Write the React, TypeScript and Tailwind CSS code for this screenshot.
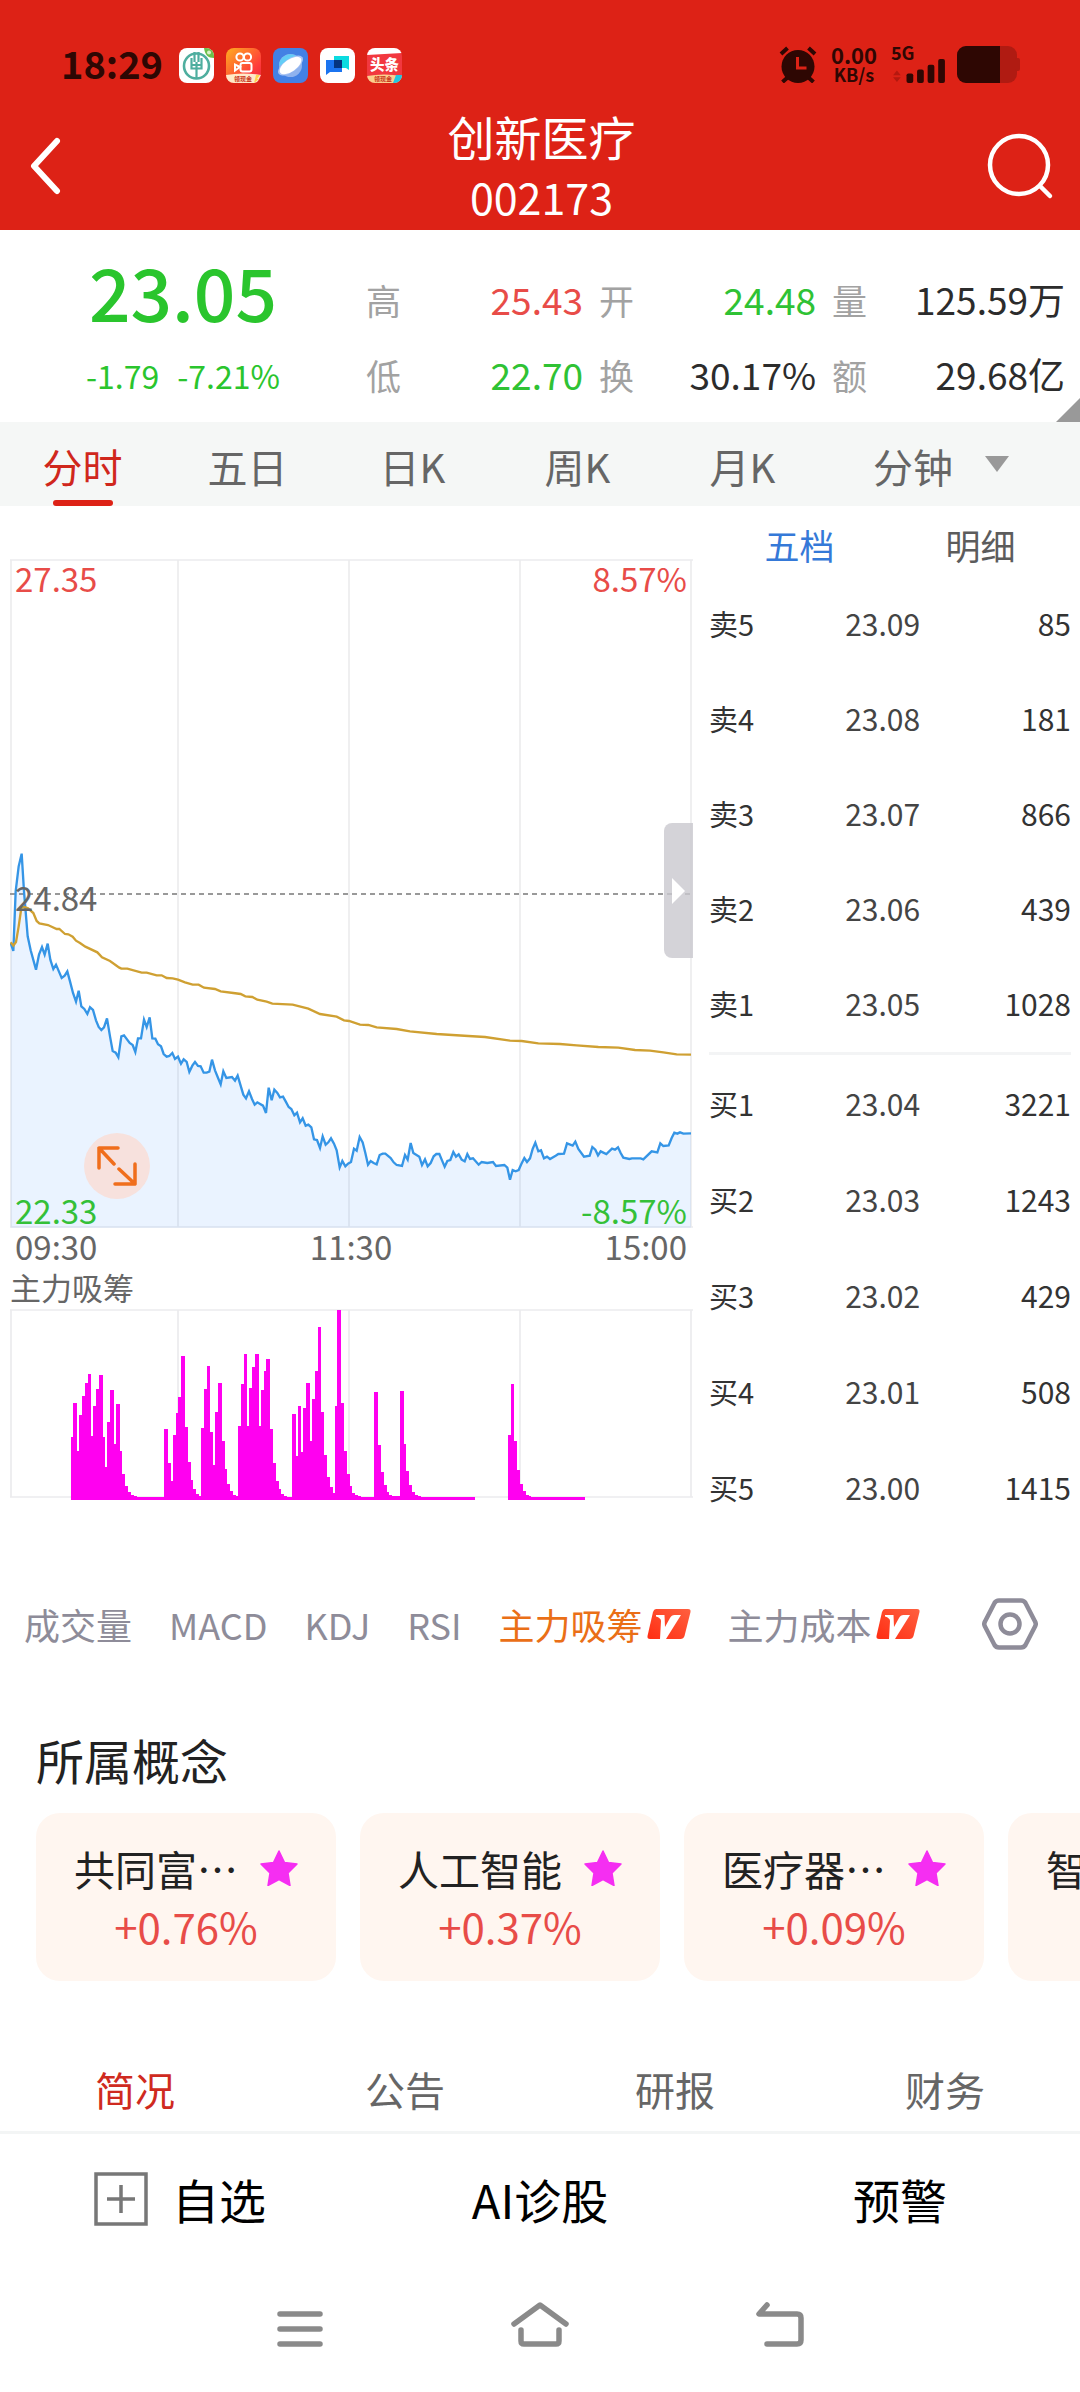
import { useState } from "react";
import type { ReactNode } from "react";
import clsx from "clsx";

type Quote = { label: string; price: string; volume: string };

const STATS = [
  [
    { label: "高", value: "25.43", tone: "text-[#e84c48]" },
    { label: "低", value: "22.70", tone: "text-[#2fc234]" },
  ],
  [
    { label: "开", value: "24.48", tone: "text-[#2fc234]" },
    { label: "换", value: "30.17%", tone: "text-[#2c2c2c]" },
  ],
  [
    { label: "量", value: "125.59万", tone: "text-[#2c2c2c]" },
    { label: "额", value: "29.68亿", tone: "text-[#2c2c2c]" },
  ],
];

const PERIODS = ["分时", "五日", "日K", "周K", "月K"];

const ASKS: Quote[] = [
  { label: "卖5", price: "23.09", volume: "85" },
  { label: "卖4", price: "23.08", volume: "181" },
  { label: "卖3", price: "23.07", volume: "866" },
  { label: "卖2", price: "23.06", volume: "439" },
  { label: "卖1", price: "23.05", volume: "1028" },
];

const BIDS: Quote[] = [
  { label: "买1", price: "23.04", volume: "3221" },
  { label: "买2", price: "23.03", volume: "1243" },
  { label: "买3", price: "23.02", volume: "429" },
  { label: "买4", price: "23.01", volume: "508" },
  { label: "买5", price: "23.00", volume: "1415" },
];

const INDICATORS = [
  { name: "成交量" },
  { name: "MACD" },
  { name: "KDJ" },
  { name: "RSI" },
  { name: "主力吸筹", vip: true },
  { name: "主力成本", vip: true },
];

const CONCEPTS = [
  { name: "共同富…", change: "+0.76%" },
  { name: "人工智能", change: "+0.37%" },
  { name: "医疗器…", change: "+0.09%" },
  { name: "智能医…", change: "+0.05%" },
];

const INFO_TABS = ["简况", "公告", "研报", "财务"];

const PRICE_LINE =
  "32,340 40,364 47,185 56,110 65,72 72,185 83,320 92,362 108,420 117,375 126,352 134,375 143,342 151,390 160,418 168,405 185,445 194,438 202,425 210,455 219,490 228,516 236,483 244,530 253,538 262,553 270,533 279,541 288,572 296,592 304,601 312,593 321,566 330,620 338,664 347,669 355,683 364,620 372,617 389,640 398,646 406,667 414,626 423,626 432,570 440,592 449,563 457,626 466,627 474,644 483,650 491,673 500,681 508,679 517,670 525,688 534,681 543,702 551,689 560,697 568,727 577,708 585,697 594,709 602,710 611,729 620,729 628,726 636,690 645,722 653,742 662,764 670,725 679,745 696,742 705,753 713,738 721,765 730,795 738,806 747,785 756,808 764,825 772,818 789,828 798,850 806,774 815,812 823,780 832,790 840,803 849,801 857,815 866,832 874,838 883,857 891,849 900,878 908,866 917,888 925,885 934,893 942,929 951,931 960,955 968,920 977,945 985,938 993,926 1002,942 1010,962 1019,1013 1027,994 1036,1010 1044,1002 1053,997 1062,957 1070,963 1079,922 " +
  "1088,938 1096,970 1104,1005 1112,994 1121,1000 1130,1004 1139,976 1148,972 1156,972 1172,985 1181,998 1190,1006 1206,1009 1215,976 1223,990 1232,940 1240,970 1258,981 1266,1006 1275,989 1283,1010 1292,1000 1301,980 1309,973 1318,973 1326,992 1334,1011 1342,994 1351,991 1360,967 1368,981 1376,974 1385,990 1394,995 1402,973 1410,988 1419,986 1436,1005 1445,997 1462,1000 1479,997 1488,1009 1513,1006 1522,1014 1530,1050 1538,1021 1547,1025 1556,1021 1564,1003 1573,985 1581,997 1590,986 1598,958 1606,939 1615,965 1623,962 1632,986 1641,981 1650,988 1667,978 1675,973 1692,972 1701,941 1718,948 1726,936 1735,958 1752,981 1769,978 1777,952 1786,960 1794,977 1802,965 1819,973 1836,957 1845,960 1854,953 1862,970 1870,984 1888,988 1896,986 1922,986 1930,989 1955,965 1972,968 1981,941 1990,949 2006,947 2015,925 2023,909 2032,912 2040,908 2050,912 2073,911";

const AVERAGE_LINE =
  "32,338 40,348 48,337 56,290 64,235 73,232 84,236 100,250 110,274 118,281 144,286 170,298 178,298 195,313 205,314 218,321 228,333 240,340 256,351 292,368 306,383 330,394 358,414 364,417 382,417 425,429 440,429 470,437 485,437 500,445 518,446 534,450 555,458 578,465 596,465 612,474 645,478 662,485 700,490 722,493 736,500 757,502 772,510 800,516 817,522 878,525 925,537 960,553 1010,561 1032,572 1047,574 1080,585 1105,586 1130,593 1190,598 1230,605 1310,613 1405,619 1455,622 1530,633 1565,634 1615,641 1680,643 1730,647 1795,652 1855,654 1905,661 1950,663 1990,668 2030,674 2073,675";

// Runs of one-minute bars: first minute, then the height of each bar.
const BAR_RUNS: { start: number; heights: number[] }[] = [
  {
    start: 0,
    heights: [
      63, 97, 49, 85, 104, 117, 126, 64, 94, 111, 125, 63, 33, 78, 110, 56, 96,
      49, 26, 14, 8, 5, 4, 3, 3, 3, 3, 3, 3, 3, 3, 3, 3,
    ],
  },
  { start: 33, heights: [71, 37, 19, 65, 87, 103, 144, 73, 38, 20, 11, 6, 4] },
  { start: 46, heights: [72, 111, 134, 68, 35, 88, 117, 59, 31, 16, 9, 5, 4] },
  {
    start: 59,
    heights: [
      74, 116, 146, 74, 112, 133, 146, 74, 110, 129, 141, 71, 37, 19, 11, 6, 4,
      3, 3,
    ],
  },
  {
    start: 78,
    heights: [86, 44, 94, 48, 92, 117, 59, 101, 129, 173, 88, 45, 23, 13, 7],
  },
  { start: 93, heights: [94, 190, 97, 49, 26, 14, 7, 5, 4, 3, 3, 3, 3, 3] },
  { start: 107, heights: [108, 55, 28, 15, 8, 5, 4, 4, 4] },
  {
    start: 116,
    heights: [
      109, 56, 29, 15, 8, 5, 4, 3, 3, 3, 3, 3, 3, 3, 3, 3, 3, 3, 3, 3, 3, 3, 3,
      3, 3, 3,
    ],
  },
  {
    start: 154,
    heights: [
      65, 116, 59, 30, 16, 9, 5, 4, 3, 3, 3, 3, 3, 3, 3, 3, 3, 3, 3, 3, 3, 3, 3,
      3, 3, 3, 3,
    ],
  },
];

const MINUTE = 2.84;

function AppIcon({ children }: { children: ReactNode }) {
  return (
    <svg viewBox="0 0 35 35" className="size-[35px] rounded-lg">
      {children}
    </svg>
  );
}

function StatusBar() {
  return (
    <div className="flex h-[83px] items-end justify-between pr-[60px] pl-[61px] text-[#2e0703]">
      <div className="flex items-end gap-3">
        <span className="mr-1 h-[37px] w-[102px] text-[38px] leading-[33px] font-bold">
          18:29
        </span>
        <AppIcon>
          <rect width="35" height="35" fill="#fff" />
          <path d="M25 0h10v10c-6 0-9-3-10-10z" fill="#6cc04a" />
          <circle cx="30" cy="4.500" r="2" fill="#d8f0c8" />
          <circle
            cx="17.500"
            cy="18"
            r="12.500"
            fill="none"
            stroke="#4fae9f"
            strokeWidth="2.600"
          />
          <path
            d="M17.500 14v17M12.500 10v10.500h10V10M15.500 4v10M19.500 4v10M12.500 17h10"
            fill="none"
            stroke="#4fae9f"
            strokeWidth="2.200"
          />
        </AppIcon>
        <AppIcon>
          <defs>
            <linearGradient id="video" x1="0" y1="0" x2="1" y2="1">
              <stop offset="0" stopColor="#ffae1f" />
              <stop offset="0.700" stopColor="#ff3b3b" />
              <stop offset="1" stopColor="#e8263c" />
            </linearGradient>
          </defs>
          <rect width="35" height="35" fill="url(#video)" />
          <g fill="none" stroke="#fff" strokeWidth="2">
            <circle cx="14" cy="9" r="3.600" />
            <circle cx="21.500" cy="9" r="3.600" />
            <rect x="14.500" y="15" width="11" height="8.500" rx="2" />
            <path d="M14 19l-5-2.500v6z" />
          </g>
          <path d="M0 27q17-3 35 0l-4 8H0z" fill="#ffe9c9" />
          <path d="M30 27l4 0-3 4 2 0-5 4z" fill="#ffd24a" />
          <text x="8" y="33" fontSize="6" fontWeight="700" fill="#c8331a">
            领现金
          </text>
        </AppIcon>
        <AppIcon>
          <rect width="35" height="35" fill="#4381e4" />
          <circle cx="17.500" cy="17.500" r="11.500" fill="#8fb2ee" />
          <path d="M6 18a11.500 11.500 0 0 1 18-9.500z" fill="#63cdf6" />
          <ellipse
            cx="17.500"
            cy="17.500"
            rx="14.500"
            ry="6.500"
            fill="#a9c4f4"
            transform="rotate(-35 17.500 17.500)"
          />
          <ellipse
            cx="17.500"
            cy="17.500"
            rx="12.500"
            ry="6"
            fill="#fff"
            transform="rotate(-35 17.500 17.500)"
          />
        </AppIcon>
        <AppIcon>
          <rect width="35" height="35" fill="#fff" />
          <path d="M14 8h15v14l-3-2H14z" fill="#0bdbe0" />
          <path d="M6 12h16v12H10l-4 3z" fill="#1b74f0" />
          <rect x="14" y="12" width="8" height="8" fill="#05357f" />
        </AppIcon>
        <AppIcon>
          <rect width="35" height="35" fill="#f2383f" />
          <path d="M0 0h35v5l-35 2z" fill="#fff" />
          <path d="M0 28q17-3 35 0v7H0z" fill="#fbcf8e" />
          <path d="M29 27h6v8h-9z" fill="#21c6e0" />
          <text x="3" y="22" fontSize="14.500" fontWeight="900" fill="#fff">
            头条
          </text>
          <text x="7" y="33" fontSize="6" fontWeight="700" fill="#c8331a">
            领现金
          </text>
        </AppIcon>
      </div>

      <div className="flex items-end">
        <svg viewBox="0 0 38 37" className="mr-3 h-[37px] w-[38px]">
          <circle cx="19" cy="20.500" r="16.500" fill="currentColor" />
          <path
            d="M2 8l6.500-6M36 8l-6.500-6M8 32l-4.500 4M30 32l4.500 4"
            stroke="currentColor"
            strokeWidth="4"
          />
          <path
            d="M18.500 11v11h9"
            fill="none"
            stroke="#dd2216"
            strokeWidth="3"
          />
        </svg>
        <span className="flex w-[50px] flex-col items-center font-bold">
          <span className="text-[22px] leading-[22px]">0.00</span>
          <span className="text-[18px] leading-[18px]">KB/s</span>
        </span>
        <div className="ml-3 flex h-10 w-[58px] flex-col font-bold">
          <span className="h-4 text-[18px] leading-[18px]">5G</span>
          <svg viewBox="0 0 56 25" className="h-[25px] w-[56px]">
            <path d="M1 17l4-5 4 5zM1 19l4 5 4-5z" fill="#b4180f" />
            <g fill="currentColor">
              <rect x="15" y="15" width="7" height="10" rx="2" />
              <rect x="26" y="11" width="7" height="14" rx="2" />
              <rect x="37" y="6" width="7" height="19" rx="2" />
              <rect x="48" width="7" height="25" rx="2" />
            </g>
          </svg>
        </div>
        <svg viewBox="0 0 63 37" className="ml-2 h-[37px] w-[63px]">
          <rect width="60" height="37" rx="9" fill="#b01b12" />
          <rect x="58" y="12" width="5" height="13" rx="2" fill="#b01b12" />
          <path
            d="M9 0h34v37H9a9 9 0 0 1-9-9V9a9 9 0 0 1 9-9z"
            fill="currentColor"
          />
        </svg>
      </div>
    </div>
  );
}

function TitleBar() {
  return (
    <div className="flex items-center justify-between pr-[26px] pl-[29px] text-white">
      <button type="button" aria-label="返回" className="w-[68px]">
        <svg viewBox="0 0 34 58" className="h-[58px] w-[34px]">
          <path
            d="M28 4L5 29l23 25"
            fill="none"
            stroke="currentColor"
            strokeWidth="6"
            strokeLinecap="round"
            strokeLinejoin="round"
          />
        </svg>
      </button>
      <h1 className="text-center font-normal">
        <span className="block h-[61px] text-[47px] leading-[54px]">
          创新医疗
        </span>
        <span className="block text-[43px] leading-[52px]">002173</span>
      </h1>
      <button type="button" aria-label="搜索" className="w-[68px]">
        <svg viewBox="0 0 68 68" className="size-[68px]">
          <g
            fill="none"
            stroke="currentColor"
            strokeWidth="4.500"
            strokeLinecap="round"
          >
            <circle cx="33" cy="33" r="29" />
            <path d="M54 54l10 10" />
          </g>
        </svg>
      </button>
    </div>
  );
}

function Summary() {
  return (
    <section className="relative grid h-48 grid-cols-[366fr_217fr_233fr_249fr_15fr] pt-8">
      <div className="flex flex-col items-center text-[#2ac52d]">
        <p className="h-[75px] text-[73px] leading-[56px] font-medium">23.05</p>
        <p className="flex gap-[18px] text-[32px] leading-[77px]">
          <span>-1.79</span>
          <span>-7.21%</span>
        </p>
      </div>
      {STATS.map((column, i) => (
        <dl
          key={column[0].label}
          className={clsx("text-[37px] leading-[75px]", i > 0 && "pl-4")}
        >
          {column.map((stat) => (
            <div key={stat.label} className="flex justify-between">
              <dt className="text-[35px] text-[#a2a2a2]">{stat.label}</dt>
              <dd className={stat.tone}>{stat.value}</dd>
            </div>
          ))}
        </dl>
      ))}
      <svg viewBox="0 0 24 24" className="absolute right-0 bottom-0 size-6">
        <path d="M24 0v24H0z" fill="#999" />
      </svg>
    </section>
  );
}

function PeriodTabs() {
  const [active, setActive] = useState("分时");
  return (
    <nav className="grid h-[84px] grid-cols-[repeat(5,165fr)_255fr] bg-[#f5f7f6] text-[40px] leading-[88px] text-[#666]">
      {PERIODS.map((name) => (
        <button
          key={name}
          type="button"
          onClick={() => setActive(name)}
          className={clsx(
            "flex flex-col items-center",
            name === active && "text-[#d0271c]",
          )}
        >
          <span className="h-[78px]">{name}</span>
          {name === active && (
            <span className="h-[6px] w-[60px] rounded-full bg-[#dd2216]" />
          )}
        </button>
      ))}
      <button type="button" className="flex h-[84px] items-center gap-8 pl-12">
        <span className="h-[84px]">分钟</span>
        <svg viewBox="0 0 24 16" className="h-4 w-6">
          <path d="M0 0h24L12 16z" fill="#999" />
        </svg>
      </button>
    </nav>
  );
}

function PriceChart() {
  return (
    <div className="relative text-[33px] leading-[36px]">
      <svg viewBox="30 -812 2049 2007" className="block w-full">
        <path
          d="M30-809H2079M30 1192H2079M33-809V1194M534-809V1194M1047-809V1194M1560-809V1194M2073-809V1194"
          stroke="#ececee"
          strokeWidth="5"
          fill="none"
        />
        <path
          d="M30 193H2079"
          stroke="#999"
          strokeWidth="6"
          strokeDasharray="15 12"
        />
        <polygon
          points={`32,1194 ${PRICE_LINE} 2073,1194`}
          fill="#2f86ff"
          fillOpacity="0.1"
        />
        <polyline
          points={PRICE_LINE}
          fill="none"
          stroke="#3595e6"
          strokeWidth="7"
        />
        <polyline
          points={AVERAGE_LINE}
          fill="none"
          stroke="#cfa032"
          strokeWidth="7"
        />
      </svg>
      <span className="absolute top-px left-[5px] text-[#e84c48]">27.35</span>
      <span className="absolute top-px right-[6px] text-[#e84c48]">8.57%</span>
      <span className="absolute top-[320px] left-[5px] text-[#666]">24.84</span>
      <span className="absolute bottom-0 left-[5px] text-[#34c038]">22.33</span>
      <span className="absolute right-[6px] bottom-0 text-[#34c038]">
        -8.57%
      </span>
      <button
        type="button"
        aria-label="收起盘口"
        className="absolute top-[264px] right-0 flex h-[135px] w-[29px] items-center justify-center rounded-l-lg bg-[#c9c8ce]/80"
      >
        <svg viewBox="0 0 13 26" className="h-[26px] w-[13px]">
          <path d="M0 0l13 13L0 26z" fill="#fff" />
        </svg>
      </button>
      <button
        type="button"
        aria-label="全屏"
        className="absolute bottom-[29px] left-[74px] flex size-[66px] items-center justify-center rounded-full bg-[#f7e1dd]"
      >
        <svg viewBox="0 0 40 40" className="size-10">
          <path
            d="M2 22V2h19M2 2l15 16M38 18v20H18M38 38L22 23"
            fill="none"
            stroke="#f06e1c"
            strokeWidth="3.500"
            strokeLinecap="round"
            strokeLinejoin="round"
          />
        </svg>
      </button>
    </div>
  );
}

function VolumeChart() {
  return (
    <svg viewBox="0 0 683 193" className="block w-full">
      <path
        d="M0 2H683M0 189H683M1 2V189M168 2V189M339 2V189M510 2V189M681 2V189"
        stroke="#ececee"
        strokeWidth="1.700"
        fill="none"
      />
      <g fill="#ff00f0" shapeRendering="crispEdges">
        {BAR_RUNS.map(({ start, heights }) =>
          heights.map((h, i) => (
            <rect
              key={start + i}
              x={60.5 + (start + i) * MINUTE}
              y={191.5 - h}
              width={3.6}
              height={h}
            />
          )),
        )}
      </g>
    </svg>
  );
}

function QuoteRows({ rows, height }: { rows: Quote[]; height: string }) {
  return (
    <table className="w-full text-[30px] leading-9 text-[#333]">
      <tbody>
        {rows.map((q) => (
          <tr key={q.label} className={height}>
            <th scope="row" className="w-1/4 text-left text-[29px] font-normal">
              {q.label}
            </th>
            <td className="w-1/3 text-right text-[#444]">{q.price}</td>
            <td className="text-right">{q.volume}</td>
          </tr>
        ))}
      </tbody>
    </table>
  );
}

function OrderBook() {
  return (
    <div className="pr-[9px] pl-4">
      <div className="grid h-[69px] grid-cols-2 pt-2 text-[35px] leading-[61px]">
        <button type="button" className="text-[#3579d8]">
          五档
        </button>
        <button type="button" className="text-[#5c5c5c]">
          明细
        </button>
      </div>
      <QuoteRows rows={ASKS} height="h-[95px]" />
      <hr className="mt-0.5 border-t-[3px] border-[#f3f4f5]" />
      <QuoteRows rows={BIDS} height="h-24" />
    </div>
  );
}

function VipBadge({ id }: { id: string }) {
  return (
    <svg viewBox="0 0 44 30" className="h-[30px] w-[44px]">
      <defs>
        <linearGradient id={id} x1="1" y1="0" x2="0" y2="1">
          <stop offset="0" stopColor="#ff6040" />
          <stop offset="1" stopColor="#ff2d12" />
        </linearGradient>
      </defs>
      <path
        d="M9 0h32q3 0 2.500 3l-6 24q-1 3-4 3H3q-3 0-2.500-3l5.500-24Q7 0 9 0z"
        fill={`url(#${id})`}
      />
      <path
        d="M9 6h8.500l.5 12 5-9q1.500-3 4.500-3H34L19 30h-6l1-18q0-3-5-4.500z"
        fill="#fff"
      />
    </svg>
  );
}

function IndicatorTabs() {
  const [active, setActive] = useState("主力吸筹");
  return (
    <nav className="flex h-[178px] items-center gap-[37px] pr-[42px] pl-6 text-[36px] leading-[44px]">
      {INDICATORS.map(({ name, vip }) => (
        <button
          key={name}
          type="button"
          onClick={() => setActive(name)}
          className={clsx(
            "flex items-center gap-1 whitespace-nowrap",
            name === active ? "text-[#ea6f17]" : "text-[#8e8c99]",
          )}
        >
          {name}
          {vip && <VipBadge id={`vip-${name}`} />}
        </button>
      ))}
      <button type="button" aria-label="指标设置" className="ml-auto">
        <svg viewBox="0 0 56 52" className="h-[52px] w-[56px]">
          <g fill="none" stroke="#8e8c99" strokeWidth="4.500">
            <path d="M17 2.500h22q3 0 4.500 2.500l9.500 18.500q1.500 2.500 0 5L43.500 47q-1.500 2.500-4.500 2.500H17q-3 0-4.500-2.500L3 28.500q-1.500-2.500 0-5L12.500 5Q14 2.500 17 2.500z" />
            <circle cx="28" cy="26" r="9.500" />
          </g>
        </svg>
      </button>
    </nav>
  );
}

function Concepts() {
  return (
    <section className="pt-0.5">
      <h2 className="mb-[7px] pl-9 text-[48px] leading-[88px] font-normal text-[#222]">
        所属概念
      </h2>
      <div className="flex gap-6 overflow-hidden pt-[3px] pl-9">
        {CONCEPTS.map((c) => (
          <a
            key={c.name}
            href="#"
            className="flex h-[168px] w-[300px] shrink-0 flex-col items-center rounded-3xl bg-[#fff6f0] pt-[26px]"
          >
            <span className="flex h-[58px] items-center gap-[22px] text-[41px] leading-[58px] text-[#222]">
              {c.name}
              <svg viewBox="0 0 38 36" className="h-9 w-[38px]">
                <path
                  d="M19 1l5.500 11.500L37 14l-9 9 2 12.500-11-6-11 6L10 23l-9-9 12.500-1.500z"
                  fill="#f52ef2"
                  stroke="#f52ef2"
                  strokeWidth="1.500"
                  strokeLinejoin="round"
                />
              </svg>
            </span>
            <span className="text-[42px] leading-[58px] text-[#e84c48]">
              {c.change}
            </span>
          </a>
        ))}
      </div>
    </section>
  );
}

function InfoTabs() {
  const [active, setActive] = useState("简况");
  return (
    <nav className="mt-[66px] grid h-[87px] grid-cols-4 border-b-[3px] border-[#f3f5f5] text-[40px] leading-[78px]">
      {INFO_TABS.map((name) => (
        <button
          key={name}
          type="button"
          onClick={() => setActive(name)}
          className={name === active ? "text-[#cf2a20]" : "text-[#666]"}
        >
          {name}
        </button>
      ))}
    </nav>
  );
}

function ActionBar() {
  return (
    <div className="grid h-[130px] grid-cols-3 text-[47px] text-black">
      <button type="button" className="flex items-center justify-center gap-6">
        <svg viewBox="0 0 54 54" className="size-[54px]">
          <path
            d="M2 2h50v50H2zM27 13v28M13 27h28"
            fill="none"
            stroke="#777"
            strokeWidth="3.500"
          />
        </svg>
        自选
      </button>
      <button type="button">AI诊股</button>
      <button type="button">预警</button>
    </div>
  );
}

function SystemNav() {
  return (
    <div className="flex h-[125px] items-center justify-center gap-[180px] text-[#8a8a8a]">
      {[
        ["最近任务", "M10 17h40M10 32h40M10 47h40"],
        ["主屏幕", "M4 27L30 8l26 19M11 33v11q0 3 3 3h32q3 0 3-3V33"],
        ["返回", "M17 8L9 17h38q4 0 4 4v22q0 4-4 4H17"],
      ].map(([label, d]) => (
        <button key={label} type="button" aria-label={label}>
          <svg viewBox="0 0 60 60" className="size-[60px]">
            <path
              d={d}
              fill="none"
              stroke="currentColor"
              strokeWidth="5.500"
              strokeLinecap="round"
              strokeLinejoin="round"
            />
          </svg>
        </button>
      ))}
    </div>
  );
}

export default function App() {
  return (
    <div className="min-h-screen overflow-hidden bg-white font-['Noto_Sans_CJK_SC',sans-serif]">
      <header className="h-[230px] bg-[#dd2216]">
        <StatusBar />
        <div className="pt-[26px]">
          <TitleBar />
        </div>
      </header>
      <main>
        <Summary />
        <PeriodTabs />
        <section className="grid grid-cols-[693fr_387fr]">
          <div className="pt-[53px] pl-[10px]">
            <PriceChart />
            <div className="flex justify-between pr-[6px] pl-[5px] text-[33px] leading-[37px] text-[#666]">
              <span>09:30</span>
              <span>11:30</span>
              <span>15:00</span>
            </div>
            <p className="text-[31px] leading-[43px] text-[#666]">主力吸筹</p>
            <VolumeChart />
          </div>
          <OrderBook />
        </section>
        <IndicatorTabs />
        <Concepts />
        <InfoTabs />
      </main>
      <footer>
        <ActionBar />
        <SystemNav />
      </footer>
    </div>
  );
}
